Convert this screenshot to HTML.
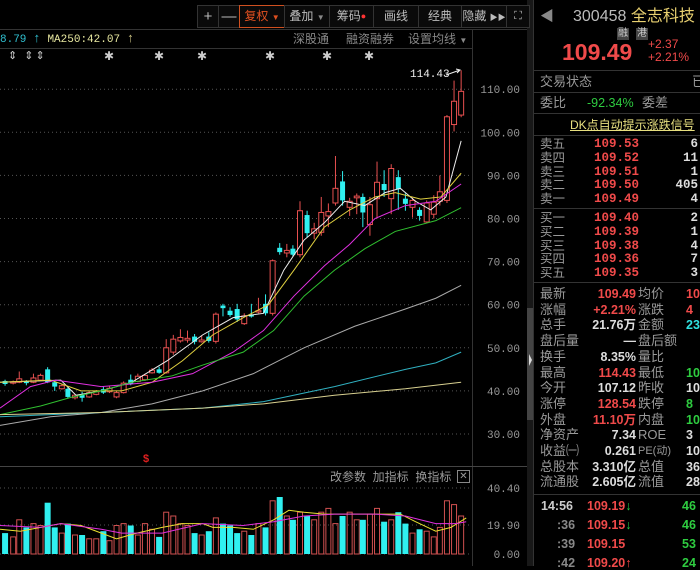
<!DOCTYPE html>
<html><head><meta charset="utf-8"><style>
body{margin:0;width:700px;height:566px;background:#000;overflow:hidden;position:relative;font-family:"Liberation Sans","Noto Sans CJK SC",sans-serif;}
.a{position:absolute;white-space:nowrap;line-height:14px;}
.btn{position:absolute;top:5px;height:21px;border:1px solid #333;color:#bbb;font-size:12px;line-height:21px;text-align:center;background:#0a0a0a;}
.r{color:#f04a4a}.g{color:#2ecc40}.w{color:#ddd}.gy{color:#aaa}.c{color:#30e0e0}
.lbl{position:absolute;left:540px;font-size:12.5px;color:#999;line-height:14px;white-space:nowrap;}
.mono{font-family:"Liberation Mono",monospace;}
</style></head><body>
<svg id="s" width="700" height="566" style="position:absolute;left:0;top:0"></svg>

<div class="btn" style="left:197px;width:20px;font-size:15px">+</div>
<div class="btn" style="left:218px;width:20px;font-size:15px">—</div>
<div class="btn" style="left:239px;width:44px;border-color:#d05020;color:#e05020">复权 <span style="font-size:8px">▼</span></div>
<div class="btn" style="left:284px;width:44px">叠加 <span style="font-size:8px;color:#888">▼</span></div>
<div class="btn" style="left:329px;width:43px">筹码<span style="color:#f33;font-size:9px;vertical-align:top">●</span></div>
<div class="btn" style="left:373px;width:44px">画线</div>
<div class="btn" style="left:418px;width:42px">经典</div>
<div class="btn" style="left:461px;width:44px">隐藏 <span style="font-size:8px">▶▶</span></div>
<div class="btn" style="left:506px;width:22px;font-size:11px">⛶</div>

<div class="a mono" style="left:0;top:32px;font-size:11px;color:#30c0d0">8.79 <span style="font-size:13px">↑</span> <span style="color:#e8e8a0">MA250:42.07 </span><span style="color:#c8c080;font-size:13px">↑</span></div>
<div class="a" style="left:293px;top:32px;font-size:12px;color:#888">深股通</div>
<div class="a" style="left:346px;top:32px;font-size:12px;color:#888">融资融券</div>
<div class="a" style="left:408px;top:32px;font-size:12px;color:#888">设置均线 <span style="font-size:8px">▼</span></div>
<div class="a" style="left:8px;top:49px;font-size:11px;color:#ccc;letter-spacing:2px">⇕ ⇕⇕</div>
<div class="a" style="left:104px;top:49px;font-size:12px;color:#ccc">✱</div>
<div class="a" style="left:154px;top:49px;font-size:12px;color:#ccc">✱</div>
<div class="a" style="left:197px;top:49px;font-size:12px;color:#ccc">✱</div>
<div class="a" style="left:265px;top:49px;font-size:12px;color:#ccc">✱</div>
<div class="a" style="left:322px;top:49px;font-size:12px;color:#ccc">✱</div>
<div class="a" style="left:364px;top:49px;font-size:12px;color:#ccc">✱</div>
<div class="a mono" style="left:410px;top:68px;font-size:11px;color:#eee">114.43</div>
<div class="a" style="left:143px;top:452px;font-size:11px;color:#e02020;font-weight:bold">$</div>
<div class="a" style="left:330px;top:470px;font-size:12px;color:#999">改参数 &nbsp;加指标 &nbsp;换指标</div>
<div class="a" style="left:457px;top:470px;width:11px;height:11px;border:1px solid #888;color:#999;font-size:10px;line-height:11px;text-align:center">✕</div>

<div class="a" style="left:540px;top:9px;font-size:14px;color:#888">◀</div>
<div class="a" style="left:573px;top:8px;font-size:16px;line-height:18px;color:#bbb">300458 <span style="color:#e8d070">全志科技</span></div>
<div class="a" style="left:617px;top:28px;font-size:10px;line-height:12px;color:#ccc;background:#444;padding:0 1px">融</div>
<div class="a" style="left:636px;top:28px;font-size:10px;line-height:12px;color:#ccc;background:#444;padding:0 1px">港</div>
<div class="a r" style="left:562px;top:40px;font-size:23px;line-height:24px;font-weight:bold">109.49</div>
<div class="a r" style="left:648px;top:38px;font-size:12px;line-height:13px">+2.37<br>+2.21%</div>
<div class="lbl" style="top:75px;font-size:13px">交易状态</div><div class="a" style="left:692px;top:75px;color:#999;font-size:13px">已</div>
<div class="lbl" style="top:96px;font-size:13px">委比</div><div class="a g" style="left:587px;top:96px;font-size:12.5px">-92.34%</div><div class="a" style="left:642px;top:96px;color:#999;font-size:13px">委差</div>
<div class="a" style="left:570px;top:118px;font-size:12px;color:#e8e080;text-decoration:underline">DK点自动提示涨跌信号</div>
<div id="ob"></div>
<div id="info"></div>
<div id="tick"></div>

<script>
const S=document.getElementById('s');let h='';
const X=x=>x*1.0135, Y=p=>434-(p-30)*4.31;
for(let p=30;p<=110;p+=10){h+=`<line x1="0" x2="472" y1="${Y(p)}" y2="${Y(p)}" stroke="#555" stroke-dasharray="1,3"/>`;
h+=`<text x="520" y="${Y(p)+4}" fill="#999" font-size="11" font-family="Liberation Mono" text-anchor="end">${p.toFixed(2)}</text>`;}
h+=`<line x1="0" x2="528" y1="29.5" y2="29.5" stroke="#333"/><line x1="0" x2="472" y1="48.5" y2="48.5" stroke="#333"/>`;
h+=`<line x1="472.5" x2="472.5" y1="29" y2="566" stroke="#333"/><line x1="0" x2="528" y1="466.5" y2="466.5" stroke="#444"/>`;
h+=`<rect x="527" y="0" width="6" height="566" fill="#181818"/><rect x="527" y="308" width="6" height="112" fill="#444"/><path d="M529 354 L532 360 L529 366Z" fill="#ddd"/>`;
h+=`<line x1="533.5" x2="533.5" y1="0" y2="566" stroke="#333"/>`;
[[488,'40.40'],[525,'19.90'],[554,'0.00']].forEach(([y,t])=>{h+=`<line x1="0" x2="472" y1="${y}" y2="${y}" stroke="#555" stroke-dasharray="1,3"/><text x="520" y="${y+4}" fill="#999" font-size="11" font-family="Liberation Mono" text-anchor="end">${t}</text>`});
const C=[[5,42.3,41.6,42.6,41.2],[13,41.8,42.1,42.4,41.5],[19,42,42.8,44.5,41.8],[26,42.2,41.8,42.5,41.3],[33,42,43,44,41.8],[40,42.5,43.6,44,42.3],[47,45,42,45.5,41.8],[54,42,41,42.3,40],[61,40.5,41.2,41.5,40.3],[67,40.5,38.6,40.8,38.2],[74,38.4,39,39.3,38],[81,39.2,38.4,39.8,37.5],[88,38.6,39.6,40,38.4],[95,39.2,39.8,40.2,39],[102,40.4,39.6,41,39.3],[108,39.8,40.6,41.2,39.5],[115,38.6,39.6,40,38.3],[122,39.6,41.8,42.2,39.4],[129,42.6,41.6,43.8,41.3],[136,42.2,43.4,44,42],[143,42.6,43.6,44,42.3],[150,44.2,44.8,45.3,44],[157,45,44.2,45.6,44],[164,44.2,50,52,44],[171,49,52,53,48.4],[178,51.6,52.4,54.3,51.2],[185,51.8,52.2,54,51.2],[192,52.6,51.4,53.2,50.8],[199,51.4,51.8,52.8,51.2],[206,52.6,51.6,53.6,51.2],[213,51.5,57.8,58.2,51],[220,59.8,59.2,60.2,57.3],[227,58.6,57.6,59.4,57.2],[234,59,56.6,60.2,56],[241,55.6,57.4,58,55.3],[248,57.6,57.4,60.2,57],[255,58.3,58.6,61.6,58],[262,60.2,58,62.4,57.5],[269,58,70.2,70.5,57.5],[276,73.2,72.2,74.3,71.6],[283,72,72.6,74.1,71],[289,73,71.6,73.8,71.2],[296,71.6,81.8,84,71],[303,80.8,76.6,81.8,75.6],[310,76.6,77.6,79,75.2],[317,76.8,81.4,85,76],[324,80.6,81.6,83.5,78],[331,83.6,87,94.5,83],[338,88.6,84.2,91,83],[345,82.6,84,84.8,80.6],[352,84.8,85.2,85.8,81],[358,85,81.4,85.8,78],[365,78.6,83.2,85,76],[372,84.6,88.4,93.2,80],[379,88,86.6,91.2,85],[386,84.6,91.6,92.6,81],[393,89.6,86.8,91.2,82],[400,84.6,83.4,85.8,81.8],[407,82.6,84.2,84.8,80.2],[414,82,80.6,82.6,79.5],[421,79.2,83.6,84.2,79],[428,81,83.8,85.4,80],[434,84,86.2,90,83],[441,84.2,103.6,104,83.6],[448,101.8,107.2,112,100.2],[455,104,109.5,114.4,103.5]];
C.forEach(([x,o,c,hi,lo])=>{x=X(x);const up=c>=o,col=up?'#e85050':'#30f0f0';const t=Y(Math.max(o,c)),b=Y(Math.min(o,c));
h+=`<line x1="${x}" x2="${x}" y1="${Y(hi)}" y2="${Y(lo)}" stroke="${col}"/>`;
h+= up?`<rect x="${x-2.5}" y="${t}" width="5" height="${Math.max(b-t,1)}" fill="#000" stroke="${col}"/>`:`<rect x="${x-2.5}" y="${t}" width="5" height="${Math.max(b-t,1.5)}" fill="${col}"/>`;});
const M=[['#eee',[[0,42],[60,42.5],[75,39],[100,40],[130,42],[165,47],[200,53],[230,57],[260,58],[280,68],[300,75],[320,79],[340,84],[360,83],[380,86],[395,87],[410,84],[425,82],[440,85],[455,98]]],
['#e0d040',[[0,42],[50,42.5],[80,40],[120,40],[150,42],[180,47],[210,53],[240,57],[265,60],[290,68],[320,78],[345,82],[370,85],[390,86],[415,84.5],[435,85],[455,90.5]]],
['#e030e0',[[0,36],[30,41],[55,42.5],[100,41],[150,42],[190,44],[230,49],[260,54],[290,62],[320,69],[345,74],[370,80],[400,83],[430,84],[455,88]]],
['#30c030',[[0,34.5],[40,36.5],[70,38.5],[100,40],[130,42],[170,43.5],[200,46],[240,49],[270,54],[300,62],[330,68],[360,73],[390,77],[430,79.5],[455,82.5]]],
['#aaa',[[0,32],[50,34],[100,35],[150,37],[200,40],[250,44],[300,50],[350,55],[400,59],[430,61.5],[455,64.5]]],
['#30b0c0',[[0,34],[100,35],[200,36],[260,37.5],[330,41],[400,45],[430,46.5],[455,49]]],
['#d8d090',[[0,34.5],[100,35],[200,36],[260,37],[330,39],[400,40.5],[455,42]]]];
M.forEach(([col,pts])=>{h+=`<polyline fill="none" stroke="${col}" stroke-width="1" points="${pts.map(([x,p])=>X(x)+','+Y(p)).join(' ')}"/>`});
h+=`<path d="M446 75 L460 70 M456 69 L460 70 L457 73" stroke="#eee" fill="none"/>`;
const V=[11,9,18,14,16,15,27,14,11,16,10,10,8,8,12,7,15,16,15,10,16,13,9,22,20,16,15,11,10,12,19,16,15,11,12,10,16,14,28,30,20,18,22,20,18,22,24,16,20,22,18,18,21,24,17,18,22,16,11,13,12,9,14,28,26,20];
C.forEach(([x,o,c],i)=>{x=X(x);const v=V[i]||12,hh=v*1.9,up=c>=o;
h+= up?`<rect x="${x-2.5}" y="${554-hh}" width="5" height="${hh}" fill="none" stroke="#d05050"/>`:`<rect x="${x-3}" y="${554-hh}" width="6" height="${hh}" fill="#30f0f0"/>`;});
const vm=(a,col)=>{h+=`<polyline fill="none" stroke="${col}" points="${a.map(([x,v])=>X(x)+','+(554-v*1.9)).join(' ')}"/>`};
vm([[0,13],[20,12],[50,15],[60,16],[80,15],[100,11],[115,8],[135,11],[160,14],[180,16],[200,16],[210,14],[230,14],[250,13],[270,18],[285,23],[300,22],[320,21],[340,21],[370,21],[395,21],[410,17],[430,12],[445,14],[460,19]],'#e8e030');
vm([[0,15],[40,14],[60,16],[100,13],[120,11],[160,11],[200,16],[240,15],[270,17],[300,20],[330,21],[370,21],[400,20],[430,16],[450,16],[460,17]],'#e030e0');
S.innerHTML=h;
let o='';const sells=[['卖五','109.53','6'],['卖四','109.52','11'],['卖三','109.51','1'],['卖二','109.50','405'],['卖一','109.49','4']],
buys=[['买一','109.40','2'],['买二','109.39','1'],['买三','109.38','4'],['买四','109.36','7'],['买五','109.35','3']];
sells.forEach((r,i)=>{const y=137+i*13.8;o+=`<div class="lbl" style="top:${y}px">${r[0]}</div><div class="a r mono" style="left:594px;top:${y}px;font-size:12.5px;font-weight:bold">${r[1]}</div><div class="a w mono" style="right:2px;top:${y}px;font-size:12.5px;font-weight:bold">${r[2]}</div>`});
buys.forEach((r,i)=>{const y=211+i*13.8;o+=`<div class="lbl" style="top:${y}px">${r[0]}</div><div class="a r mono" style="left:594px;top:${y}px;font-size:12.5px;font-weight:bold">${r[1]}</div><div class="a w mono" style="right:2px;top:${y}px;font-size:12.5px;font-weight:bold">${r[2]}</div>`});
[70,92,113,135,208,282,494].forEach(y=>o+=`<div class="a" style="left:534px;top:${y}px;width:166px;height:1px;background:#333"></div>`);
document.getElementById('ob').innerHTML=o;
const I=[['最新','109.49','r','均价','10','r'],['涨幅','+2.21%','r','涨跌','4','r'],['总手','21.76万','w','金额','23','c'],['盘后量','—','w','盘后额','',''],['换手','8.35%','w','量比','',''],['最高','114.43','r','最低','10','g'],['今开','107.12','w','昨收','10','w'],['涨停','128.54','r','跌停','8','g'],['外盘','11.10万','r','内盘','10','g'],['净资产','7.34','w','ROE','3','w'],['收益㈠','0.261','w','PE(动)','10','w'],['总股本','3.310亿','w','总值','36','w'],['流通股','2.605亿','w','流值','28','w']];
let s='';I.forEach((r,i)=>{const y=287+i*15.7;s+=`<div class="lbl" style="top:${y}px;font-size:13px">${r[0]}</div><div class="a ${r[2]}" style="right:64px;top:${y}px;font-size:12.5px;font-weight:bold">${r[1]}</div><div class="a" style="left:638px;top:${y}px;color:#999;font-size:${r[3].length>3?11:13}px">${r[3]}</div><div class="a ${r[5]}" style="left:686px;top:${y}px;font-size:12.5px;font-weight:bold">${r[4]}</div>`});
document.getElementById('info').innerHTML=s;
const T=[['14:56','109.19','↓','46'],[':36','109.15','↓','46'],[':39','109.15','','53'],[':42','109.20','↑','24']];
let t='';T.forEach((r,i)=>{const y=499+i*19;t+=`<div class="a" style="left:${i?557:541}px;top:${y}px;font-size:12.5px;font-weight:bold;color:${i?'#888':'#ccc'}">${r[0]}</div><div class="a r" style="left:587px;top:${y}px;font-size:12.5px;font-weight:bold">${r[1]}<span style="color:${r[2]=='↑'?'#f44':'#2c4'}">${r[2]}</span></div><div class="a g" style="left:682px;top:${y}px;font-size:12.5px;font-weight:bold">${r[3]}</div>`});
document.getElementById('tick').innerHTML=t;
</script>
</body></html>
